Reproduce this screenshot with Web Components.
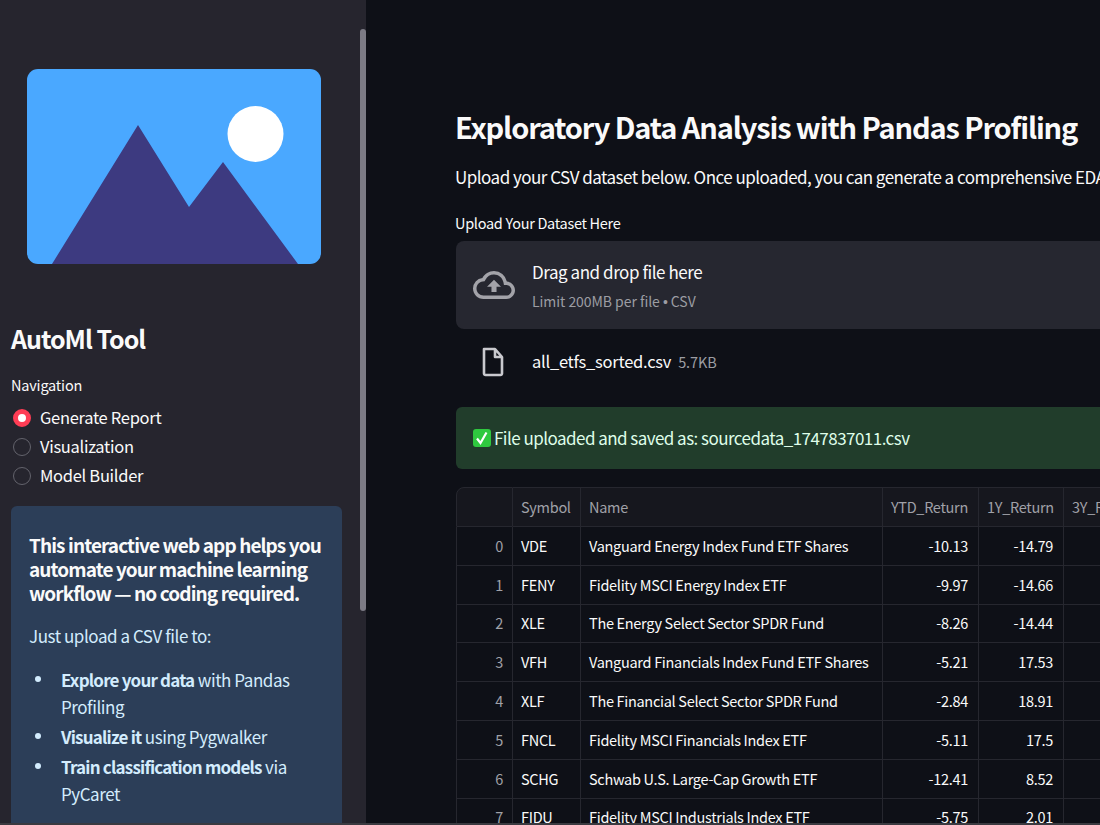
<!DOCTYPE html>
<html lang="en">
<head>
<meta charset="utf-8">
<title>AutoMl Tool</title>
<style>
  html, body { margin: 0; height: 100%; background: #0e1017; overflow: hidden; }
  body { font-family: "Noto Sans CJK SC", "Noto Sans", sans-serif; color: #fafafa; }
</style>
</head>
<body>
<app-shell>
  <side-panel slot="side">
    <nav-radio checked>Generate Report</nav-radio>
    <nav-radio>Visualization</nav-radio>
    <nav-radio>Model Builder</nav-radio>
    <info-box></info-box>
  </side-panel>
  <main-panel slot="main">
    <upload-zone></upload-zone>
    <file-row name="all_etfs_sorted.csv" size="5.7KB"></file-row>
    <success-alert>File uploaded and saved as: sourcedata_1747837011.csv</success-alert>
    <data-table></data-table>
  </main-panel>
</app-shell>

<script>
  class AppShell extends HTMLElement {
    constructor() {
      super();
      this.attachShadow({ mode: 'open' });
      this.shadowRoot.innerHTML = `
        <style>
          :host { display: flex; width: 1100px; height: 825px; overflow: hidden; position: relative; }
          .side { flex: 0 0 366px; height: 825px; overflow: hidden; background: #26252e; position: relative; }
          .main { flex: 1; min-width: 0; height: 825px; overflow: hidden; }
          /* overlay scrollbar of the sidebar */
          .thumb { position: absolute; right: 0; top: 29px; width: 6px; height: 582px; border-radius: 3px; background: #7c7b85; }
          .edge { position: absolute; left: 0; right: 0; bottom: 0; height: 2px; background: #3a3a40; }
        </style>
        <div class="side"><slot name="side"></slot><div class="thumb"></div></div>
        <div class="main"><slot name="main"></slot></div>
        <div class="edge"></div>
      `;
    }
  }
  customElements.define('app-shell', AppShell);

  class SidePanel extends HTMLElement {
    constructor() {
      super();
      this.attachShadow({ mode: 'open' });
      this.shadowRoot.innerHTML = `
        <style>
          :host { display: block; padding: 69px 24px 0 11px; }
          .logo { display: block; width: 294px; height: 195px; margin-left: 16px; }
          h2 { margin: 56px 0 0; font-size: 25px; line-height: 36px; font-weight: 700; letter-spacing: -1px; color: #fafafa; }
          .label { margin: 19px 0 8px; font-size: 14.500px; line-height: 20px; letter-spacing: -0.2px; color: #fafafa; }
        </style>
        <svg class="logo" viewBox="0 0 294 195" aria-hidden="true">
          <rect width="294" height="195" rx="11" fill="#4aa8ff"/>
          <circle cx="228.500" cy="65" r="28" fill="#fff"/>
          <path d="M25 195 111 56 162 138 196 93 271 195Z" fill="#3d3a80"/>
        </svg>
        <h2>AutoMl Tool</h2>
        <div class="label">Navigation</div>
        <slot></slot>
      `;
    }
  }
  customElements.define('side-panel', SidePanel);

  class NavRadio extends HTMLElement {
    constructor() {
      super();
      this.attachShadow({ mode: 'open' });
      this.shadowRoot.innerHTML = `
        <style>
          :host { display: flex; align-items: center; gap: 9px; height: 29px; padding-left: 2px; font-size: 16.500px; letter-spacing: -0.3px; color: #fafafa; }
          .dot { box-sizing: border-box; width: 18px; height: 18px; border-radius: 50%; border: 1.500px solid #63636c; }
          :host([checked]) .dot { border: 5.500px solid #ff3d55; background: #fff; }
          span.text { position: relative; top: -1px; }
        </style>
        <span class="dot"></span><span class="text"><slot></slot></span>
      `;
    }
  }
  customElements.define('nav-radio', NavRadio);

  class InfoBox extends HTMLElement {
    constructor() {
      super();
      this.attachShadow({ mode: 'open' });
      this.shadowRoot.innerHTML = `
        <style>
          :host { display: block; margin-top: 16px; padding: 27px 18px 30px; border-radius: 6px; background: #2c3e58; color: #d3ecfd; font-size: 17px; line-height: 27px; letter-spacing: -0.45px; }
          .lead { margin: 0 0 17px; font-size: 19px; line-height: 24px; font-weight: 700; letter-spacing: -0.9px; color: #fafafa; }
          p { margin: 0; }
          ul { margin: 17px 0 0; padding: 0; list-style: none; }
          li { display: flex; margin-bottom: 3px; }
          li i { flex: none; width: 25px; height: 6px; margin: 10px 1px 0 6px; position: relative; }
          li i::before { content: ""; position: absolute; left: 0; top: 0; width: 6px; height: 6px; border-radius: 50%; background: #d3ecfd; }
          b { font-weight: 700; letter-spacing: -0.8px; }
        </style>
        <p class="lead">This interactive web app helps you automate your machine learning workflow — no coding required.</p>
        <p>Just upload a CSV file to:</p>
        <ul>
          <li><i></i><span><b>Explore your data</b> with Pandas Profiling</span></li>
          <li><i></i><span><b>Visualize it</b> using Pygwalker</span></li>
          <li><i></i><span><b>Train classification models</b> via PyCaret</span></li>
        </ul>
      `;
    }
  }
  customElements.define('info-box', InfoBox);

  class MainPanel extends HTMLElement {
    constructor() {
      super();
      this.attachShadow({ mode: 'open' });
      this.shadowRoot.innerHTML = `
        <style>
          :host { display: block; padding: 104px 0 0 90px; white-space: nowrap; }
          h1 { margin: 0 0 0 -1px; font-size: 29px; line-height: 44px; font-weight: 700; letter-spacing: -1.12px; color: #fafafa; }
          p { margin: 17px 0 0 -1px; font-size: 17px; line-height: 24px; letter-spacing: -0.52px; color: #fafafa; overflow: hidden; }
          .label { margin: 24px 0 8px -1px; font-size: 14.500px; line-height: 20px; letter-spacing: -0.3px; color: #fafafa; }
        </style>
        <h1>Exploratory Data Analysis with Pandas Profiling</h1>
        <p>Upload your CSV dataset below. Once uploaded, you can generate a comprehensive EDA</p>
        <div class="label">Upload Your Dataset Here</div>
        <slot></slot>
      `;
    }
  }
  customElements.define('main-panel', MainPanel);

  class UploadZone extends HTMLElement {
    constructor() {
      super();
      this.attachShadow({ mode: 'open' });
      this.shadowRoot.innerHTML = `
        <style>
          :host { display: flex; align-items: center; gap: 17px; height: 88px; padding-left: 17px; border-radius: 8px 0 0 8px; background: #262730; }
          svg { flex: none; width: 42px; height: 42px; }
          .copy { padding-top: 2px; }
          .title { font-size: 17px; line-height: 24px; letter-spacing: -0.45px; color: #fafafa; }
          .hint { margin-top: 7px; font-size: 14px; line-height: 20px; letter-spacing: -0.05px; color: #9c9da3; }
          .hint span { font-family: "Liberation Sans", sans-serif; }
        </style>
        <svg viewBox="0 0 24 24" aria-hidden="true">
          <path fill="#a3a3a9" d="M19.350 10.040A7.490 7.490 0 0 0 12 4C9.110 4 6.600 5.640 5.350 8.040A5.994 5.994 0 0 0 0 14c0 3.310 2.690 6 6 6h13c2.760 0 5-2.240 5-5 0-2.640-2.050-4.780-4.650-4.960zM19 18H6c-2.210 0-4-1.790-4-4 0-2.050 1.530-3.760 3.560-3.970l1.070-.11.500-.95A5.469 5.469 0 0 1 12 6c2.620 0 4.880 1.860 5.390 4.430l.300 1.500 1.530.11A2.980 2.980 0 0 1 22 15c0 1.650-1.350 3-3 3zM8 13h2.550v3h2.900v-3H16l-4-4z"/>
        </svg>
        <div class="copy">
          <div class="title">Drag and drop file here</div>
          <div class="hint">Limit 200MB per file <span>•</span> CSV</div>
        </div>
      `;
    }
  }
  customElements.define('upload-zone', UploadZone);

  class FileRow extends HTMLElement {
    constructor() {
      super();
      this.attachShadow({ mode: 'open' });
      this.shadowRoot.innerHTML = `
        <style>
          :host { display: flex; align-items: center; height: 66px; padding-left: 25px; }
          svg { flex: none; width: 24px; height: 30px; margin-right: 27px; }
          .text { position: relative; top: -1px; }
          .name { font-size: 16.500px; letter-spacing: -0.25px; color: #fafafa; }
          .size { margin-left: 7px; font-size: 14.500px; color: #9c9da3; letter-spacing: -0.1px; }
        </style>
        <svg viewBox="0 0 24 30" aria-hidden="true">
          <path fill="none" stroke="#c9c9ce" stroke-width="2.600" stroke-linejoin="round" d="M3 2h11l7 8v16.500a1.500 1.500 0 0 1-1.500 1.500h-15A1.500 1.500 0 0 1 3 26.500ZM14 2v8h7"/>
        </svg>
        <span class="text"><span class="name"></span><span class="size"></span></span>
      `;
    }
    connectedCallback() {
      this.shadowRoot.querySelector('.name').textContent = this.getAttribute('name');
      this.shadowRoot.querySelector('.size').textContent = this.getAttribute('size');
    }
  }
  customElements.define('file-row', FileRow);

  class SuccessAlert extends HTMLElement {
    constructor() {
      super();
      this.attachShadow({ mode: 'open' });
      this.shadowRoot.innerHTML = `
        <style>
          :host { display: flex; align-items: center; gap: 3px; height: 62px; margin-top: 12px; padding-left: 17px; border-radius: 6px 0 0 6px; background: #213d2b; font-size: 17px; letter-spacing: -0.54px; color: #dffde9; }
          svg { flex: none; width: 18px; height: 18px; }
          span { position: relative; top: -1px; }
        </style>
        <svg viewBox="0 0 18 18" aria-hidden="true">
          <rect width="18" height="18" rx="3" fill="#2fc93f"/>
          <path d="M4 9.500 7.500 14 13.500 3.500" fill="none" stroke="#fff" stroke-width="2.200"/>
        </svg>
        <span><slot></slot></span>
      `;
    }
  }
  customElements.define('success-alert', SuccessAlert);

  const ROWS = [
    ['0', 'VDE', 'Vanguard Energy Index Fund ETF Shares', '-10.13', '-14.79'],
    ['1', 'FENY', 'Fidelity MSCI Energy Index ETF', '-9.97', '-14.66'],
    ['2', 'XLE', 'The Energy Select Sector SPDR Fund', '-8.26', '-14.44'],
    ['3', 'VFH', 'Vanguard Financials Index Fund ETF Shares', '-5.21', '17.53'],
    ['4', 'XLF', 'The Financial Select Sector SPDR Fund', '-2.84', '18.91'],
    ['5', 'FNCL', 'Fidelity MSCI Financials Index ETF', '-5.11', '17.5'],
    ['6', 'SCHG', 'Schwab U.S. Large-Cap Growth ETF', '-12.41', '8.52'],
    ['7', 'FIDU', 'Fidelity MSCI Industrials Index ETF', '-5.75', '2.01'],
  ];

  class DataTable extends HTMLElement {
    constructor() {
      super();
      this.attachShadow({ mode: 'open' });
      const body = ROWS.map(r => `
        <tr>
          <td class="idx">${r[0]}</td><td>${r[1]}</td><td>${r[2]}</td>
          <td class="num">${r[3]}</td><td class="num">${r[4]}</td><td></td>
        </tr>`).join('');
      this.shadowRoot.innerHTML = `
        <style>
          :host { display: block; width: 700px; margin-top: 18px; }
          table { table-layout: fixed; width: 700px; border-collapse: separate; border-spacing: 0; font-size: 14.500px; letter-spacing: -0.3px; color: #fafafa; }
          th, td { box-sizing: border-box; height: 38.800px; padding: 0 8px 1px; border-right: 1px solid #26272f; border-bottom: 1px solid #26272f; overflow: hidden; white-space: nowrap; }
          th { font-weight: 400; text-align: left; color: #a0a1a8; background: #16171e; height: 40px; border-top: 1px solid #26272f; padding-bottom: 2px; }
          th:first-child, td:first-child { border-left: 1px solid #26272f; }
          th:first-child { border-top-left-radius: 8px; }
          .num { text-align: right; padding-right: 10px; }
          .idx { text-align: right; color: #a0a1a8; padding-right: 9px; }
        </style>
        <table>
          <colgroup>
            <col style="width:57px"><col style="width:68px"><col style="width:302px">
            <col style="width:96px"><col style="width:85px"><col style="width:92px">
          </colgroup>
          <tr><th></th><th>Symbol</th><th>Name</th><th class="num">YTD_Return</th><th class="num">1Y_Return</th><th>3Y_Return</th></tr>
          ${body}
        </table>
      `;
    }
  }
  customElements.define('data-table', DataTable);
</script>
</body>
</html>
